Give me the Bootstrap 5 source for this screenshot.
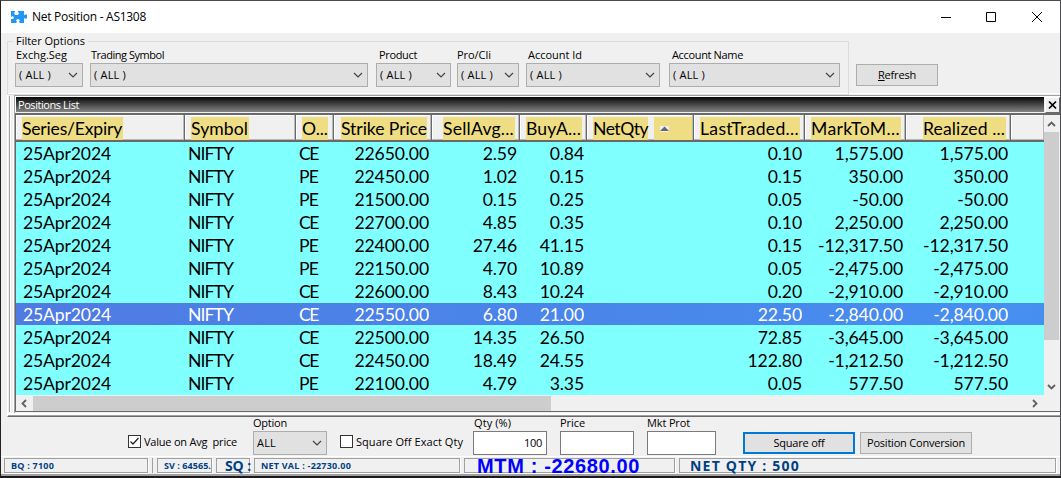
<!DOCTYPE html>
<html lang="en">
<head>
<meta charset="utf-8">
<title>Net Position - AS1308</title>
<link href="https://cdn.jsdelivr.net/npm/bootstrap@5.3.0/dist/css/bootstrap.min.css" rel="stylesheet">
<style>
body{margin:0;background:#1d1a1e;overflow:hidden;color:#000;font:11px/14px "Open Sans","Noto Sans",sans-serif}
.win{width:1061px;height:476px;background:#f0f0f0;border:1px solid #4c4c4e;border-left-color:#222;border-bottom:0}
.win svg{display:block;flex:none}
.titlebar{height:32px;background:#fff;padding-left:10px}
.titlebar .cap{font-size:12px;padding-left:5px}
.topzone{height:60px}
.fgroup{width:842px;height:54px;margin:8px 0 0 6px;border:1px solid #dcdcdc;padding:6px 0 0 7px;position:relative}
.fgroup .leg{position:absolute;left:5px;top:-8px;background:#f0f0f0;padding:0 3px}
.fld{flex:none}
.lab{height:15px;padding-left:1px}
.tools .lab{height:14px;padding-left:0;line-height:12px}
.drop{height:24px;background:#e1e1e1;border:1px solid #adadad;padding:0 4px 0 3px;flex:none}
.btnx{height:22px;border:1px solid #adadad;background:#e1e1e1;border-radius:0;padding:0;font-size:11px;line-height:20px;color:#000;flex:none}
.btnx.def{border:2px solid #0078d7;line-height:18px}
.dock{height:324px;margin-left:6px;border-top:1px solid #fff;border-left:1px solid #fff;border-bottom:1px solid #696969;box-shadow:inset 0 -1px #a0a0a0,inset 0 -3px #fff}
.grip{width:7px;margin:2px 0 4px 1px;border-left:1px solid #a0a0a0;border-right:1px solid #fff;box-shadow:inset 1px 0 #fff}
.dockin{width:1046px;border-left:1px solid #a0a0a0;border-top:1px solid #a0a0a0;margin-top:1px;flex:none;height:318px}
.gripbar{height:17px;border-top:1px solid #fff}
.gradbar{width:1029px;height:15px;background:linear-gradient(#080808,#858585);color:#fff;border-left:1px solid #fff;padding-left:2px;line-height:15px}
.xbtn{width:15px;height:16px;margin-left:1px;border:1px solid #fff;border-right-color:#696969;border-bottom-color:#696969}
.view{height:299px;border-top:2px solid #696969;border-left:1px solid #696969;border-bottom:1px solid #696969}
.gridv{width:1028px;height:280px;background:#80ffff;overflow:hidden;font-family:Lato,sans-serif;font-size:17.6px;line-height:23px}
.hcell,.bcell{flex:none;overflow:hidden}
.hcell{height:27px;border-right:1px solid #696969;border-bottom:2px solid #696969;box-shadow:inset -1px -1px #b8b8b8,inset 1px 1px #fff;background:#f0f0f0;padding:2px 0 0 6px;position:relative}
.hcell span{display:inline-block;height:23px;background:#eedd82;line-height:24px}
.hcell.r{text-align:right;padding:2px 4px 0 0}
.rowx{height:23px;width:1028px}
.rowx.sel{color:#fff;background:linear-gradient(90deg,#4f7be2,#468ff0);height:22px;margin-bottom:1px}
.bcell{letter-spacing:-.12px;text-align:right;line-height:24px}
.sbar{background:#f0f0f0}
.thumb{background:#cdcdcd}
.tools{height:39px}
.inp{height:24px;border:1px solid #7a7a7a;background:#fff;padding-right:4px;line-height:22px;text-align:right}
.chk{width:13px;height:13px;border:1px solid #333;background:#fff;flex:none}
.status{height:20px;border-top:1px solid #fff;border-bottom:2px solid #a0a0a0;padding:1px 0 0 3px;color:#003f85;font-weight:700}
.pane{height:15px;border:1px solid #a0a0a0;box-shadow:1px 1px #fff;flex:none;font-size:9px;line-height:14px;white-space:nowrap}
.mtm{font:bold 20px/14px "Liberation Sans",sans-serif;color:#00f}
.fit{display:inline-block;white-space:pre}
</style>
</head>
<body>
<div class="win">
  <div class="titlebar d-flex align-items-center">
    <svg width="16" height="15" viewBox="0 0 16 15"><path fill="#2196f3" d="M0 1h4v1l-1 1 1 2h3l1-2-1-1V1h6v4h1l1-1 1 1v3l-1 1-2-1v5H9l-1-1 1-2-2-1-2 1 1 2-1 1H0V9h2l1-1-1-2-2 1z"/></svg>
    <span class="cap"><span class="fit" data-w="114">Net Position - AS1308</span></span>
    <svg class="ms-auto" width="125" height="14" viewBox="0 0 125 14" fill="none" stroke="#000"><path d="M6 7.5h10M51.5 2.5h9v9h-9zM97 2l10 10M107 2L97 12"/></svg>
  </div>
  <div class="topzone d-flex">
    <div class="fgroup d-flex">
      <span class="leg"><span class="fit" data-w="69">Filter Options</span></span>
      <div class="fld" style="width:75px"><div class="lab"><span class="fit" data-w="51">Exchg.Seg</span></div><div class="drop" style="width:68px" data-v="( ALL )"></div></div>
      <div class="fld" style="width:286px"><div class="lab"><span class="fit" data-w="73">Trading Symbol</span></div><div class="drop" style="width:278px" data-v="( ALL )"></div></div>
      <div class="fld" style="width:81px"><div class="lab" style="padding-left:3px"><span class="fit" data-w="38">Product</span></div><div class="drop" style="width:75px" data-v="( ALL )"></div></div>
      <div class="fld" style="width:69px"><div class="lab" style="padding-left:0"><span class="fit" data-w="34">Pro/Cli</span></div><div class="drop" style="width:62px" data-v="( ALL )"></div></div>
      <div class="fld" style="width:143px"><div class="lab" style="padding-left:2px"><span class="fit" data-w="54">Account Id</span></div><div class="drop" style="width:134px" data-v="( ALL )"></div></div>
      <div class="fld"><div class="lab" style="padding-left:3px"><span class="fit" data-w="71">Account Name</span></div><div class="drop" style="width:171px" data-v="( ALL )"></div></div>
    </div>
    <button class="btn btnx" style="width:82px;margin:31px 0 0 7px"><span class="fit" data-w="38"><u>R</u>efresh</span></button>
  </div>
  <div class="dock d-flex">
    <div class="grip"></div>
    <div class="dockin">
      <div class="gripbar d-flex"><div class="gradbar"><span class="fit" data-w="61">Positions List</span></div><div class="xbtn"><svg width="13" height="14" viewBox="0 0 13 14" stroke="#000" stroke-width="1.7"><path d="M3 3.500l7 7M10 3.500l-7 7"/></svg></div></div>
      <div class="view">
        <div class="d-flex">
          <div class="gridv"><div class="d-flex" id="head"></div><div id="rows"></div></div>
          <div class="sbar d-flex flex-column" style="width:16px">
            <svg width="16" height="17" viewBox="0 0 16 17" fill="none" stroke="#606060" stroke-width="1.8"><path d="M4 11l3.500-3.500L11 11"/></svg>
            <div class="thumb" style="height:208px;width:15px"></div>
            <svg class="mt-auto" width="16" height="17" viewBox="0 0 16 17" fill="none" stroke="#606060" stroke-width="1.8"><path d="M4 7l3.500 3.500L11 7"/></svg>
          </div>
        </div>
        <div class="sbar d-flex" style="height:16px;padding-top:1px">
          <svg width="17" height="15" viewBox="0 0 17 15" fill="none" stroke="#606060" stroke-width="1.8"><path d="M10 4L6.500 7.500 10 11"/></svg>
          <div class="thumb" style="width:518px"></div>
          <svg style="margin-left:476px" width="17" height="15" viewBox="0 0 17 15" fill="none" stroke="#606060" stroke-width="1.8"><path d="M6 4l3.500 3.500L6 11"/></svg>
        </div>
      </div>
    </div>
  </div>
  <div class="tools d-flex">
    <div class="chk" style="margin:18px 3px 0 127px"><svg width="11" height="11" viewBox="0 0 11 11" fill="none" stroke="#222" stroke-width="1.3"><path d="M1.500 5.500L4 8l5.500-6"/></svg></div>
    <div style="width:109px;padding-top:18px"><span class="fit" data-w="93">Value on Avg  price</span></div>
    <div style="width:87px"><div class="lab"><span class="fit" data-w="34">Option</span></div><div class="drop" style="width:74px" data-v="ALL"></div></div>
    <div class="chk" style="margin:18px 3px 0 0"></div>
    <div style="width:117px;padding-top:18px"><span class="fit" data-w="107">Square Off Exact Qty</span></div>
    <div style="width:87px"><div class="lab" style="padding-left:1px"><span class="fit" data-w="37">Qty (%)</span></div><div class="inp" style="width:74px"><span class="fit" data-w="18">100</span></div></div>
    <div style="width:87px"><div class="lab"><span class="fit" data-w="25">Price</span></div><div class="inp" style="width:74px"></div></div>
    <div style="width:96px"><div class="lab"><span class="fit" data-w="43">Mkt Prot</span></div><div class="inp" style="width:69px"></div></div>
    <button class="btn btnx def" style="width:112px;margin-top:15px"><span class="fit" data-w="51">Square off</span></button>
    <button class="btn btnx" style="width:112px;margin:15px 0 0 5px"><span class="fit" data-w="98">Position Conversion</span></button>
  </div>
  <div class="status d-flex">
    <div class="pane" style="width:144px;padding-left:6px"><span class="fit" data-w="43">BQ : 7100</span></div>
    <div style="width:1px;height:15px;background:#a0a0a0;margin:0 4px"></div>
    <div class="pane" style="width:55px;padding-left:6px"><span class="fit" data-w="47">SV : 64565.</span></div>
    <div class="pane" style="width:34px;margin-left:4px;padding-left:8px;font-size:14px;line-height:14px"><span class="fit" data-w="26">SQ :</span></div>
    <div class="pane" style="width:206px;margin-left:4px;padding-left:6px"><span class="fit" data-w="90">NET VAL : -22730.00</span></div>
    <div class="pane mtm" style="width:211px;margin-left:4px;padding-left:12px"><span class="fit" data-w="163">MTM : -22680.00</span></div>
    <div class="pane" style="width:377px;margin-left:4px;padding-left:10px;font-size:14px;line-height:14px"><span class="fit" data-w="110">NET QTY : 500</span></div>
  </div>
</div>
<script src="https://cdn.jsdelivr.net/npm/bootstrap@5.3.0/dist/js/bootstrap.bundle.min.js"></script>
<script>
document.querySelectorAll('.drop').forEach(d => {
  d.classList.add('d-flex', 'align-items-center');
  const w = d.dataset.v === 'ALL' ? 19 : 32;
  d.innerHTML = `<span class="fit" data-w="${w}">${d.dataset.v}</span><svg class="ms-auto" width="10" height="8" viewBox="0 0 10 8" fill="none" stroke="#444" stroke-width="1.200"><path d="M1 2l4 4 4-4"/></svg>`;
});
// title, column width, text width, highlight width, right aligned
const cols = [['Series/Expiry',169,100,101,0],['Symbol',111,57,58,0],['O...',38,26,26,0],['Strike Price',98,86,86,1],['SellAvg...',88,71,72,1],['BuyA...',67,55,56,1],['NetQty',107,55,55,0],['LastTraded...',111,99,100,1],['MarkToM...',101,89,90,1],['Realized ...',105,82,83,1]];
document.getElementById('head').innerHTML = cols.map(c =>
  `<div class="hcell ${c[4] ? 'r' : ''}" style="width:${c[1]}px"><span style="width:${c[3]}px;text-align:left"><b class="fit fw-normal" data-w="${c[2]}">${c[0]}</b></span>${c[0] === 'NetQty' ? '<svg style="position:absolute;left:67px;top:2px" width="38" height="23"><path fill="#eedd82" d="M0 0h38v23H0z"/><path fill="#f0f0f0" d="M6 9h9v6H6z"/><path fill="#666" d="M6 14l4.500-4.500L15 14z"/></svg>' : ''}</div>`
).join('') + '<div class="hcell" style="width:33px;border-right:0"></div>';
const data = `CE 22650.00 2.59 0.84 0.10 1,575.00
PE 22450.00 1.02 0.15 0.15 350.00
PE 21500.00 0.15 0.25 0.05 -50.00
CE 22700.00 4.85 0.35 0.10 2,250.00
PE 22400.00 27.46 41.15 0.15 -12,317.50
PE 22150.00 4.70 10.89 0.05 -2,475.00
CE 22600.00 8.43 10.24 0.20 -2,910.00
CE 22550.00 6.80 21.00 22.50 -2,840.00
CE 22500.00 14.35 26.50 72.85 -3,645.00
CE 22450.00 18.49 24.55 122.80 -1,212.50
PE 22100.00 4.79 3.35 0.05 577.50`.split('\n');
const ends = [413, 501, 568, 786, 887, 992];
document.getElementById('rows').innerHTML = data.map((line, i) => {
  const [o, strike, sell, buy, ltp, mtm] = line.split(' ');
  let x = 318, nums = '';
  [strike, sell, buy, ltp, mtm, mtm].forEach((v, k) => { nums += `<div class="bcell" style="width:${ends[k] - x}px">${v}</div>`; x = ends[k]; });
  return `<div class="rowx d-flex ${i === 7 ? 'sel' : ''}"><div class="bcell text-start" style="width:172px;padding-left:7px"><span class="fit" data-w="88">25Apr2024</span></div><div class="bcell text-start" style="width:111px"><span class="fit" data-w="45">NIFTY</span></div><div class="bcell text-start" style="width:35px"><span class="fit" data-w="19">${o}</span></div>${nums}</div>`;
}).join('');
// spread each label over its column's text width
document.querySelectorAll('.fit').forEach(e => {
  e.style.letterSpacing = '0px';
  const gap = (e.dataset.w - e.getBoundingClientRect().width) / e.textContent.length;
  e.style.letterSpacing = gap.toFixed(3) + 'px';
});
</script>
</body>
</html>
